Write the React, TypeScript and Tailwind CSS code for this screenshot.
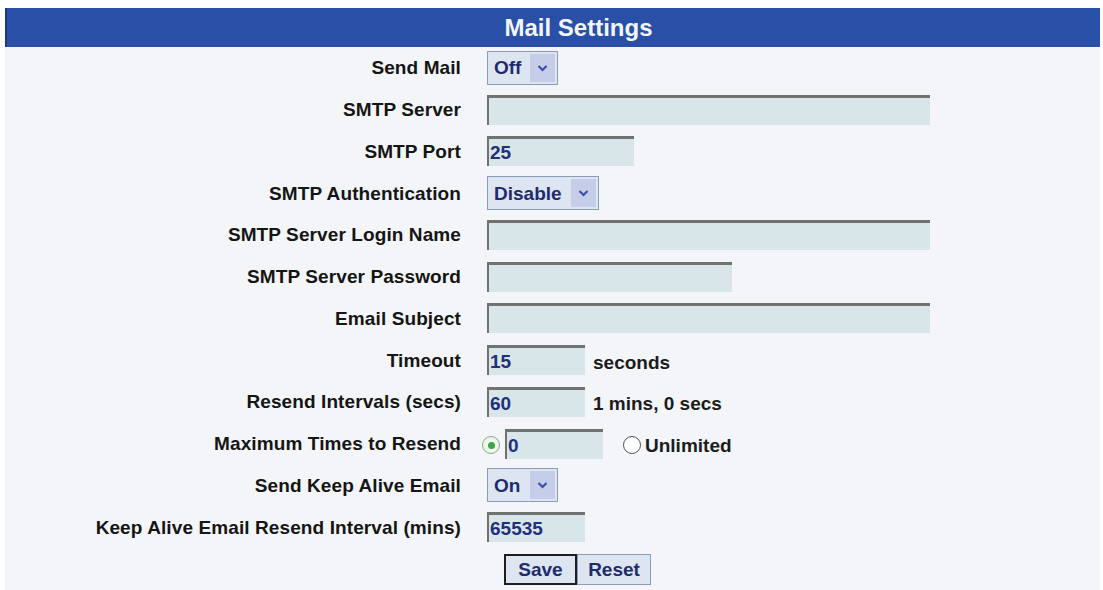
import React from 'react'

const font = { fontFamily: '"Liberation Sans", Arial, sans-serif' }

function Field({ className = '', value = '' }: { className?: string; value?: string }) {
    return (
        <div
            className={`h-[30px] bg-[#d8e6ea] border-t-[3px] border-l-[2px] border-t-[#6f726f] border-l-[#6f726f] pl-[1px] flex items-center text-[19px] font-bold text-[#22307a] leading-none ${className}`}
        >
            {value}
        </div>
    )
}

function Select({ value, className = '' }: { value: string; className?: string }) {
    return (
        <div className={`h-[34px] flex items-stretch border border-[#8d9cb6] bg-[#dde5f1] ${className}`}>
            <span className="flex-1 flex items-center pl-[6px] text-[19px] font-bold text-[#1f2b6e] leading-none">
                {value}
            </span>
            <span className="w-[25px] my-[2px] mr-[2px] bg-[#c6cde8] flex items-center justify-center">
                <svg width="11" height="8" viewBox="0 0 11 8">
                    <polyline points="1.5,2 5.5,6 9.5,2" fill="none" stroke="#3a4fa8" strokeWidth="2.2" />
                </svg>
            </span>
        </div>
    )
}

function Radio({ checked }: { checked?: boolean }) {
    return (
        <span
            className={`w-[18px] h-[18px] rounded-full border-[1.5px] flex items-center justify-center ${checked ? 'border-[#7fae7f] bg-[#eef6ee]' : 'border-[#555] bg-white'}`}
        >
            {checked && <span className="w-[7px] h-[7px] rounded-full bg-[#3fa545]" />}
        </span>
    )
}

function Row({ label, children }: { label: string; children: React.ReactNode }) {
    return (
        <div className="h-[41.75px] flex items-center">
            <div className="w-[456px] text-right text-[19px] font-bold text-[#151515] leading-none tracking-[0.1px]">
                {label}
            </div>
            <div className="pl-[26px] flex items-center flex-1">{children}</div>
        </div>
    )
}

const note = 'text-[19px] font-bold text-[#1c1c1c] leading-none'

export default function App() {
    return (
        <div className="w-[1103px] h-[590px] bg-white overflow-hidden" style={font}>
            <div className="pt-[8px] pl-[5px] pr-[3px]">
                <div className="h-[39px] bg-[#2a4fa6] border-l-[2px] border-[#1d3a85] flex items-center justify-center pl-[50px]">
                    <span className="text-[24px] font-bold text-[#f2f6fb] leading-none">Mail Settings</span>
                </div>
                <div className="bg-[#f3f5f8]">
                    <Row label="Send Mail">
                        <Select value="Off" className="w-[71px]" />
                    </Row>
                    <Row label="SMTP Server">
                        <Field className="w-[443px]" />
                    </Row>
                    <Row label="SMTP Port">
                        <Field className="w-[147px]" value="25" />
                    </Row>
                    <Row label="SMTP Authentication">
                        <Select value="Disable" className="w-[112px]" />
                    </Row>
                    <Row label="SMTP Server Login Name">
                        <Field className="w-[443px]" />
                    </Row>
                    <Row label="SMTP Server Password">
                        <Field className="w-[245px]" />
                    </Row>
                    <Row label="Email Subject">
                        <Field className="w-[443px]" />
                    </Row>
                    <Row label="Timeout">
                        <Field className="w-[98px]" value="15" />
                        <span className={`${note} ml-[8px] mt-[4px]`}>seconds</span>
                    </Row>
                    <Row label="Resend Intervals (secs)">
                        <Field className="w-[98px]" value="60" />
                        <span className={`${note} ml-[8px] mt-[4px]`}>1 mins, 0 secs</span>
                    </Row>
                    <Row label="Maximum Times to Resend">
                        <span className="-ml-[5px] mr-[5px] mt-[3px]">
                            <Radio checked />
                        </span>
                        <Field className="w-[98px]" value="0" />
                        <span className="ml-[20px] mr-[4px] mt-[3px]">
                            <Radio />
                        </span>
                        <span className={`${note} mt-[4px]`}>Unlimited</span>
                    </Row>
                    <Row label="Send Keep Alive Email">
                        <Select value="On" className="w-[71px]" />
                    </Row>
                    <Row label="Keep Alive Email Resend Interval (mins)">
                        <Field className="w-[98px]" value="65535" />
                    </Row>
                    <div className="h-[43px] flex items-center justify-center pl-[50px]">
                        <div className="flex h-[31px]">
                            <button className="w-[73px] border-[2px] border-[#1e1e1e] bg-[#dce5f0] text-[19px] font-bold text-[#1f2b6e] leading-none">
                                Save
                            </button>
                            <button className="w-[74px] border border-[#8d9cb6] bg-[#dce5f0] text-[19px] font-bold text-[#1f2b6e] leading-none">
                                Reset
                            </button>
                        </div>
                    </div>
                </div>
            </div>
        </div>
    )
}
